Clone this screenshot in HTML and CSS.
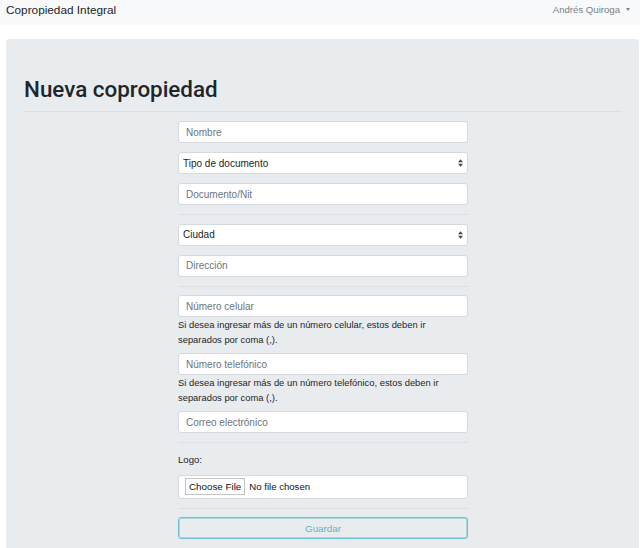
FILE: index.html
```html
<!DOCTYPE html>
<html lang="es">
<head>
<meta charset="utf-8">
<title>Nueva copropiedad</title>
<link rel="stylesheet" href="styles.css">
</head>
<body>
<nav class="navbar">
  <span class="brand">Copropiedad Integral</span>
  <span class="user">Andrés Quiroga <span class="caret"></span></span>
</nav>
<main class="jumbotron">
  <h1 class="title">Nueva copropiedad</h1>
  <hr class="rule">
  <form class="form">
    <input class="control" type="text" placeholder="Nombre">
    <select class="control select"><option>Tipo de documento</option></select>
    <input class="control" type="text" placeholder="Documento/Nit">
    <hr class="rule">
    <select class="control select"><option>Ciudad</option></select>
    <input class="control" type="text" placeholder="Dirección">
    <hr class="rule">
    <div class="group">
      <input class="control" type="text" placeholder="Número celular">
      <p class="help">Si desea ingresar más de un número celular, estos deben ir separados por coma (,).</p>
    </div>
    <div class="group">
      <input class="control" type="text" placeholder="Número telefónico">
      <p class="help">Si desea ingresar más de un número telefónico, estos deben ir separados por coma (,).</p>
    </div>
    <input class="control" type="text" placeholder="Correo electrónico">
    <hr class="rule">
    <label class="label">Logo:</label>
    <div class="file">
      <span class="file-btn">Choose File</span>
      <span class="file-name">No file chosen</span>
    </div>
    <hr class="rule">
    <button class="save" type="button">Guardar</button>
  </form>
</main>
</body>
</html>
```
FILE: styles.css
```css
html, body {
  margin: 0;
  padding: 0;
  background: #fff;
}
body {
  font-family: "Liberation Sans", Arial, sans-serif;
  font-size: 11px;
  color: #212529;
  overflow: hidden;
  height: 548px;
}
.navbar {
  height: 25px;
  background: #f8f9fa;
  display: flex;
  align-items: center;
  justify-content: space-between;
  padding: 0 10px 0 6px;
}
.brand {
  font-size: 11.8px;
  color: #212529;
  margin-top: -6px;
}
.user {
  font-size: 9.6px;
  color: #7b8187;
  margin-top: -7px;
  display: flex;
  align-items: center;
}
.caret {
  display: inline-block;
  width: 0;
  height: 0;
  border-left: 2.5px solid transparent;
  border-right: 2.5px solid transparent;
  border-top: 3px solid #7b8187;
  margin-left: 6px;
}
.jumbotron {
  margin: 14px 1px 0 6px;
  background: #e9ecef;
  border-radius: 4px 4px 0 0;
  padding: 36px 17px 40px 18px;
  min-height: 520px;
}
.title {
  margin: 0;
  font-family: Roboto, "Liberation Sans", sans-serif;
  font-size: 22.4px;
  font-weight: 500;
  line-height: 28px;
  color: #212529;
}
.rule {
  border: 0;
  border-top: 1px solid #dcdfe3;
  margin: 8px 0 9px;
  height: 0;
}
.form {
  width: 290px;
  margin: 0 auto;
  display: flex;
  flex-direction: column;
}
.form > .rule {
  margin: 0 0 8.5px;
}
.control {
  box-sizing: border-box;
  height: 22px;
  width: 100%;
  margin: 0 0 9px;
  border: 1px solid #d6dade;
  border-radius: 3px;
  background: #fff;
  font-family: inherit;
  font-size: 10px;
  color: #212529;
  padding: 0 7px;
  outline: none;
}
.control::placeholder {
  color: #6c757d;
}
.select {
  appearance: none;
  -webkit-appearance: none;
  padding: 0 4px;
  background-image: url("data:image/svg+xml;utf8,<svg xmlns='http://www.w3.org/2000/svg' width='6' height='9' viewBox='0 0 6 9'><path d='M3 0L6 3.5H0z M3 9L0 5.5H6z' fill='%23444'/></svg>");
  background-repeat: no-repeat;
  background-position: right 4px center;
  background-size: 5px 8px;
}
.group {
  margin-bottom: 6px;
}
.group .control {
  margin-bottom: 0;
}
.help {
  margin: 0;
  font-size: 9.4px;
  line-height: 15px;
  color: #212529;
}
.label {
  font-size: 9.6px;
  line-height: 15px;
  margin: 0 0 8px;
  color: #212529;
}
.file {
  box-sizing: border-box;
  height: 24px;
  margin-bottom: 9px;
  border: 1px solid #d6dade;
  border-radius: 3px;
  background: #fff;
  display: flex;
  align-items: center;
  padding: 0 6px;
  gap: 4px;
}
.file-btn {
  border: 1px solid #c6c6c6;
  background: #fff;
  font-size: 9.8px;
  line-height: 15px;
  padding: 0 3px;
  color: #111;
}
.file-name {
  font-size: 9.6px;
  color: #111;
}
.save {
  box-sizing: border-box;
  height: 22px;
  width: 100%;
  border: 1px solid #72c0cc;
  box-shadow: inset 0 0 0 1px #a8d8df;
  border-radius: 3px;
  background: transparent;
  color: #5fb3c1;
  font-family: inherit;
  font-size: 9.8px;
  padding: 0;
}
```
